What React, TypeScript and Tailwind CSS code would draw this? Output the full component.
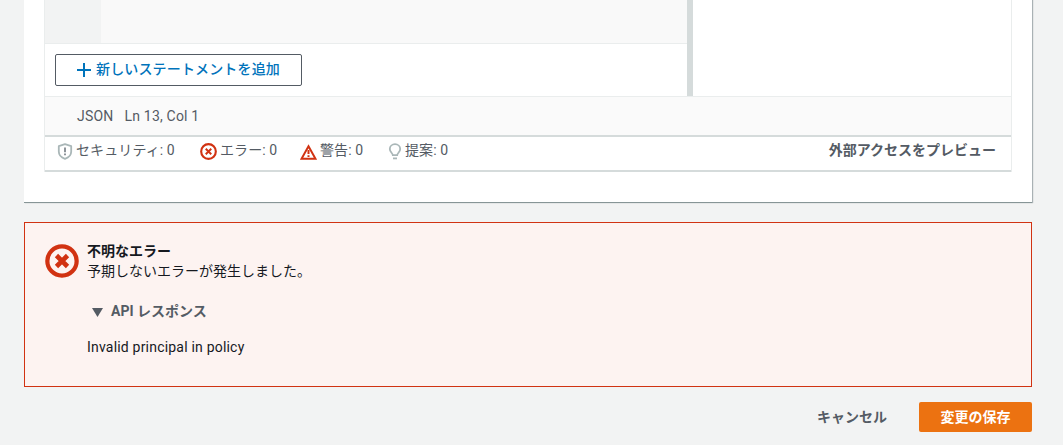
import React from 'react';

const fontStack = { fontFamily: 'Roboto, "Noto Sans CJK JP", sans-serif' };

const ShieldIcon = () => (
  <svg width="16" height="17" viewBox="0 0 16 17" fill="none">
    <path d="M8 1.200 14.200 3.200V8.500C14.200 12 11.500 14.600 8 15.800 4.500 14.600 1.800 12 1.800 8.500V3.200Z" stroke="#aab7b8" strokeWidth="1.800" strokeLinejoin="round" />
    <path d="M8 4.600V9.300M8 10.600V12.300" stroke="#687078" strokeWidth="1.500" />
  </svg>
);

const ErrorIcon = ({ size, cross = 2.2 }: { size: number; cross?: number }) => (
  <svg width={size} height={size} viewBox="0 0 16 16" fill="none">
    <circle cx="8" cy="8" r="6.900" stroke="#d13212" strokeWidth="2" />
    <path d="M5.400 5.400 10.600 10.600M10.600 5.400 5.400 10.600" stroke="#d13212" strokeWidth={cross} />
  </svg>
);

const WarningIcon = () => (
  <svg width="17" height="16" viewBox="0 0 17 16" fill="none">
    <path d="M8.500 2.200 15.500 14.800H1.500Z" stroke="#d13212" strokeWidth="2" strokeLinejoin="miter" />
    <path d="M8.500 6V10M8.500 11.200V13" stroke="#d13212" strokeWidth="2" />
  </svg>
);

const BulbIcon = () => (
  <svg width="14" height="17" viewBox="0 0 14 17" fill="none">
    <path d="M4.800 12.200C4.800 10 1.800 9.200 1.800 6 1.800 3.200 4.200 1.200 7 1.200S12.200 3.200 12.200 6C12.200 9.200 9.200 10 9.200 12.200Z" stroke="#aab7b8" strokeWidth="1.800" strokeLinejoin="round" />
    <path d="M5 15.400H9" stroke="#aab7b8" strokeWidth="1.800" />
  </svg>
);

const Stat = ({ icon, label, className }: { icon: React.ReactNode; label: string; className: string }) => (
  <div className={`flex items-center gap-[3px] ${className}`}>
    {icon}
    <span className="-translate-y-px tracking-[0.1px]">{label}</span>
  </div>
);

export default function App() {
  return (
    <div className="h-[445px] w-[1063px] overflow-hidden bg-[#f2f3f3] pl-6 pr-[31px] text-[14px] text-[#545b64]" style={fontStack}>
      {/* Editor card */}
      <div className="h-[203px] border-b border-[#879596] bg-white px-5 shadow-[1px_0_1px_0_rgba(0,28,36,0.3)]">
        <div className="border-x border-[#eaeded]">
          <div className="flex h-[97px] border-b border-[#eaeded]">
            <div className="flex w-[642px] flex-col">
              <div className="flex h-[44px] border-b border-[#eaeded] bg-[#f9f9f9]">
                <div className="w-[56px] bg-[#f2f3f3]" />
              </div>
              <div className="px-[10px] pt-[10px]">
                <button className="flex h-[32px] w-[247px] items-center justify-center gap-[5px] rounded-[2px] border border-[#545b64] bg-white text-[14px] font-medium tracking-[0.15px] text-[#0073bb]">
                  <svg width="14" height="14" viewBox="0 0 14 14" fill="none">
                    <path d="M7 0V14M0 7H14" stroke="#0073bb" strokeWidth="2" />
                  </svg>
                  <span className="-translate-y-px">新しいステートメントを追加</span>
                </button>
              </div>
            </div>
            <div className="w-[6px] bg-[#d5dbdb]" />
            <div className="flex-1" />
          </div>
          <div className="flex h-[40px] items-center gap-[11px] border-b-2 border-[#d5dbdb] bg-[#fafafa] pl-[32px] tracking-[0.2px] text-[#545b64]">
            <span>JSON</span>
            <span>Ln 13, Col 1</span>
          </div>
          <div className="flex h-[35px] items-center border-b-2 border-[#d5dbdb] pb-[4px] pl-[12px] pr-[15px]">
            <Stat icon={<ShieldIcon />} label="セキュリティ: 0" className="w-[143px]" />
            <Stat icon={<ErrorIcon size={17} cross={1.800} />} label="エラー: 0" className="w-[100px]" />
            <Stat icon={<WarningIcon />} label="警告: 0" className="w-[88px]" />
            <Stat icon={<BulbIcon />} label="提案: 0" className="w-[80px]" />
            <button className="ml-auto -translate-y-px font-bold">外部アクセスをプレビュー</button>
          </div>
        </div>
      </div>

      {/* Error alert */}
      <div className="mt-[19px] flex h-[165px] border border-[#d13212] bg-[#fdf3f1] pl-5 pt-[21px] text-[14px] text-[#16191f]">
        <ErrorIcon size={34} />
        <div className="ml-2 -mt-[2px]">
          <div className="font-bold leading-[19px]">不明なエラー</div>
          <div className="leading-[20px]">予期しないエラーが発生しました。</div>
          <div className="mt-[20px] flex items-center gap-[8px] pl-[5px] font-bold text-[#545b64]">
            <svg width="11" height="9" viewBox="0 0 11 9" className="translate-y-px">
              <path d="M0 0H11L5.500 9Z" fill="#545b64" />
            </svg>
            <span>API レスポンス</span>
          </div>
          <div className="mt-[15px] tracking-[0.2px]">Invalid principal in policy</div>
        </div>
      </div>

      {/* Footer actions */}
      <div className="mt-[15px] flex items-center justify-end font-bold">
        <button className="mr-[32px]">キャンセル</button>
        <button className="h-[30px] w-[113px] rounded-[2px] bg-[#ec7211] text-white">変更の保存</button>
      </div>
    </div>
  );
}
